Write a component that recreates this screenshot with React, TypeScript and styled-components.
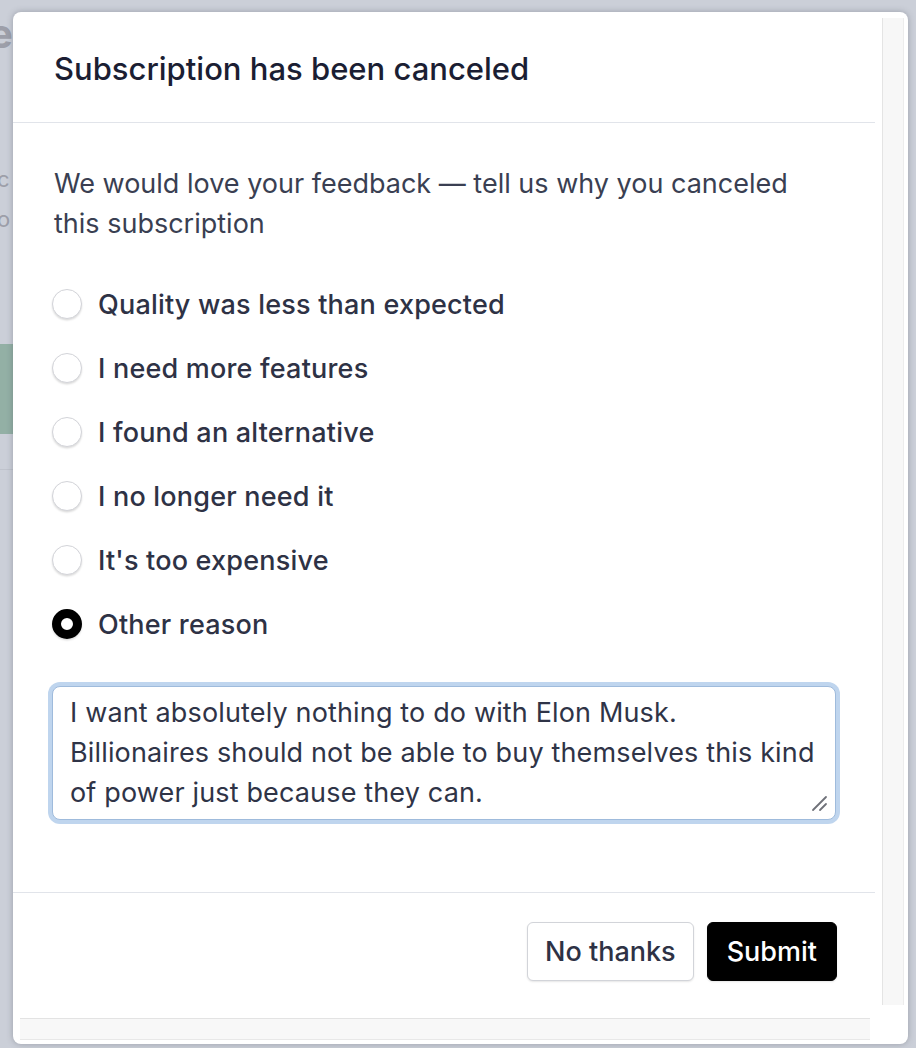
import styled, { createGlobalStyle } from "styled-components";

const GlobalStyle = createGlobalStyle`
  html, body {
    margin: 0;
    padding: 0;
    background: #cbcfd8;
    font-family: Inter, "Noto Sans", "Liberation Sans", sans-serif;
  }
  * { box-sizing: border-box; }
`;

const Page = styled.div`
  position: relative;
  width: 916px;
  height: 1048px;
  overflow: hidden;
  background: #cbcfd8;
`;

// the dimmed page behind the dialog, only its left edge shows
const BackPage = styled.div`
  width: 14px;
  overflow: hidden;
  display: flex;
  flex-direction: column;
  color: #9d9fa9;
`;

const BackTitle = styled.div`
  font-size: 40px;
  font-weight: 700;
  line-height: 40px;
  margin: 14px 0 0 -11px;
`;

const BackLine = styled.div`
  font-size: 22px;
  line-height: 30px;
  margin-left: -3px;
  margin-top: ${({ $top }: { $top: number }) => $top}px;
`;

const BackBand = styled.div`
  height: 90px;
  margin-top: 110px;
  background: #93b0a5;
`;

const BackRule = styled.div`
  height: 1px;
  margin-top: 35px;
  background: #bfc3cc;
`;

const Modal = styled.div`
  position: absolute;
  top: 12px;
  left: 13px;
  width: 895px;
  height: 1032px;
  background: #fff;
  border-radius: 8px;
  box-shadow: 0 0 6px rgba(60, 66, 80, 0.35);
  display: grid;
  grid-template-columns: 869px 22px 4px;
  grid-template-rows: 1006px 22px 4px;
  overflow: hidden;
`;

const Content = styled.div`
  width: 862px;
  display: flex;
  flex-direction: column;
`;

const Header = styled.div`
  height: 111px;
  display: flex;
  align-items: center;
  padding: 2px 41px 0;
  border-bottom: 1.5px solid #e1e4ea;
`;

const Title = styled.h2`
  margin: 0;
  font-size: 31px;
  font-weight: 500;
  color: #1b1e33;
`;

const Body = styled.div`
  padding: 41px 41px 72px;
  border-bottom: 1.5px solid #e1e4ea;
`;

const Intro = styled.p`
  margin: 0 0 28px;
  font-size: 27px;
  line-height: 40px;
  color: #3a3f52;
`;

const Options = styled.div`
  display: flex;
  flex-direction: column;
`;

const OptionRow = styled.label`
  height: 64px;
  display: flex;
  align-items: center;
  gap: 16px;
  margin-left: -2px;
  font-size: 27px;
  font-weight: 500;
  letter-spacing: 0.2px;
  color: #2e3245;
`;

const Radio = styled.span<{ $checked: boolean }>`
  width: 30px;
  height: 30px;
  border-radius: 50%;
  flex-shrink: 0;
  background: #fff;
  border: ${({ $checked }) => ($checked ? "9px solid #000" : "1.5px solid #d3d4d9")};
  box-shadow: 0 1.5px 2px rgba(0, 0, 0, 0.14);
`;

const Field = styled.div`
  position: relative;
  margin: 30px 0 0 -2px;
  width: 784px;
`;

const TextArea = styled.textarea`
  display: block;
  width: 100%;
  height: 134px;
  padding: 6px 8px 6px 17px;
  border: 1px solid #9fbbdc;
  border-radius: 8px;
  box-shadow: 0 0 0 4px #bfd5ee;
  font-family: inherit;
  font-size: 27px;
  line-height: 40px;
  letter-spacing: 0.15px;
  color: #2f3447;
  outline: none;
  resize: none;
  overflow: hidden;
`;

const Grip = styled.svg`
  position: absolute;
  right: 8px;
  bottom: 8px;
  width: 18px;
  height: 18px;
`;

const Footer = styled.div`
  display: flex;
  justify-content: flex-end;
  gap: 13px;
  padding: 29px 38px 0;
`;

const Button = styled.button<{ $primary?: boolean }>`
  height: 59px;
  padding: 0 ${({ $primary }) => ($primary ? 19 : 17)}px;
  border-radius: 6px;
  font-family: inherit;
  font-size: 27px;
  font-weight: 500;
  cursor: pointer;
  color: ${({ $primary }) => ($primary ? "#fff" : "#2e3245")};
  background: ${({ $primary }) => ($primary ? "#000" : "#fff")};
  border: 1.5px solid ${({ $primary }) => ($primary ? "#000" : "#d2d4d9")};
  box-shadow: 0 1px 2px rgba(0, 0, 0, 0.1);
`;

const VTrack = styled.div`
  margin: 6px 0 13px;
  background: #f7f7f7;
  border-left: 1.5px solid #e4e4e4;
  border-right: 1px solid #ececec;
`;

const HTrack = styled.div`
  grid-column: 1 / 2;
  margin: 0 12px 0 7px;
  background: #f8f8f8;
  border-top: 1.5px solid #e3e3e3;
  border-bottom: 1px solid #e8e8e8;
`;

const reasons = [
  "Quality was less than expected",
  "I need more features",
  "I found an alternative",
  "I no longer need it",
  "It's too expensive",
  "Other reason",
];

export default function App() {
  const selected = "Other reason";
  return (
    <Page>
      <GlobalStyle />
      <BackPage>
        <BackTitle>e</BackTitle>
        <BackLine $top={110}>c</BackLine>
        <BackLine $top={10}>o</BackLine>
        <BackBand />
        <BackRule />
      </BackPage>
      <Modal>
        <Content>
          <Header>
            <Title>Subscription has been canceled</Title>
          </Header>
          <Body>
            <Intro>
              We would love your feedback — tell us why you canceled
              <br />
              this subscription
            </Intro>
            <Options>
              {reasons.map((r) => (
                <OptionRow key={r}>
                  <Radio $checked={r === selected} />
                  {r}
                </OptionRow>
              ))}
            </Options>
            <Field>
              <TextArea
                defaultValue={
                  "I want absolutely nothing to do with Elon Musk.\nBillionaires should not be able to buy themselves this kind\nof power just because they can."
                }
              />
              <Grip viewBox="0 0 18 18">
                <path d="M3 16 L16 3 M10 16 L16 10" stroke="#6f7179" strokeWidth="1.8" strokeLinecap="round" />
              </Grip>
            </Field>
          </Body>
          <Footer>
            <Button>No thanks</Button>
            <Button $primary>Submit</Button>
          </Footer>
        </Content>
        <VTrack />
        <HTrack />
      </Modal>
    </Page>
  );
}
